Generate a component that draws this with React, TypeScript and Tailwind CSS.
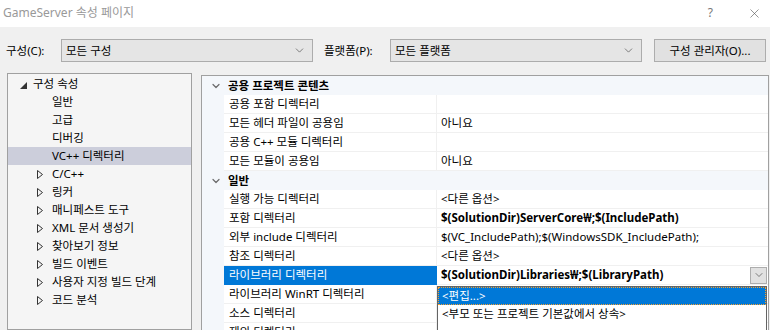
import { ChevronDown, X } from "lucide-react";

const tree = [
  { label: "일반", kind: "leaf" },
  { label: "고급", kind: "leaf" },
  { label: "디버깅", kind: "leaf" },
  { label: "VC++ 디렉터리", kind: "leaf", selected: true },
  { label: "C/C++", kind: "node" },
  { label: "링커", kind: "node" },
  { label: "매니페스트 도구", kind: "node" },
  { label: "XML 문서 생성기", kind: "node" },
  { label: "찾아보기 정보", kind: "node" },
  { label: "빌드 이벤트", kind: "node" },
  { label: "사용자 지정 빌드 단계", kind: "node" },
  { label: "코드 분석", kind: "node" },
];

type Row =
  | { type: "header"; label: string }
  | { type: "prop"; name: string; value?: string; bold?: boolean; selected?: boolean };

const rows: Row[] = [
  { type: "header", label: "공용 프로젝트 콘텐츠" },
  { type: "prop", name: "공용 포함 디렉터리" },
  { type: "prop", name: "모든 헤더 파일이 공용임", value: "아니요" },
  { type: "prop", name: "공용 C++ 모듈 디렉터리" },
  { type: "prop", name: "모든 모듈이 공용임", value: "아니요" },
  { type: "header", label: "일반" },
  { type: "prop", name: "실행 가능 디렉터리", value: "<다른 옵션>" },
  { type: "prop", name: "포함 디렉터리", value: "$(SolutionDir)ServerCore₩;$(IncludePath)", bold: true },
  { type: "prop", name: "외부 include 디렉터리", value: "$(VC_IncludePath);$(WindowsSDK_IncludePath);" },
  { type: "prop", name: "참조 디렉터리", value: "<다른 옵션>" },
  { type: "prop", name: "라이브러리 디렉터리", value: "$(SolutionDir)Libraries₩;$(LibraryPath)", bold: true, selected: true },
  { type: "prop", name: "라이브러리 WinRT 디렉터리" },
  { type: "prop", name: "소스 디렉터리" },
  { type: "prop", name: "제외 디렉터리" },
];

function Combo({ text, width }: { text: string; width: string }) {
  return (
    <div className={`${width} h-[23px] flex items-center justify-between border border-[#acacac] bg-[#e5e5e5] pl-[4px] pr-[6px]`}>
      <span>{text}</span>
      <ChevronDown size={13} strokeWidth={1.2} className="text-[#444]" />
    </div>
  );
}

export default function App() {
  return (
    <div className="w-[770px] h-[330px] overflow-hidden flex flex-col bg-[#f0f0f0] text-[11.5px] text-black font-['Segoe_UI','Noto_Sans','Noto_Sans_CJK_KR',sans-serif]">
      <div className="h-[27px] shrink-0 bg-white flex items-center pl-[3px] pr-[8px] text-[12px] text-[#999]">
        <span className="flex-1 -mt-[2px]">GameServer 속성 페이지</span>
        <span className="mr-[34px] text-[#777] -mt-[2px]">?</span>
        <X size={15} strokeWidth={1} className="text-[#555]" />
      </div>

      <div className="flex items-center h-[23px] mt-[12px] shrink-0">
        <span className="ml-[6px] w-[55px]">구성(C):</span>
        <Combo text="모든 구성" width="w-[252px]" />
        <span className="ml-[11px] w-[66px]">플랫폼(P):</span>
        <Combo text="모든 플랫폼" width="w-[252px]" />
        <div className="ml-[12px] w-[112px] h-[23px] flex items-center justify-center border border-[#adadad] bg-[#e1e1e1]">
          구성 관리자(O)...
        </div>
      </div>

      <div className="flex flex-1 mt-[11px] min-h-0">
        <div className="ml-[7px] w-[185px] border border-[#a0a0a0] bg-[#f5f5f5] pt-[1px]">
          <div className="h-[18px] flex items-center">
            <svg width="7" height="7" viewBox="0 0 7 7" className="ml-[12px] mt-[2px]">
              <polygon points="7,0 7,7 0,7" fill="#333" />
            </svg>
            <span className="ml-[6px]">구성 속성</span>
          </div>
          {tree.map((t) => (
            <div
              key={t.label}
              className={`h-[18px] flex items-center ${t.selected ? "bg-[#cccedb]" : ""}`}
            >
              {t.kind === "node" ? (
                <svg width="6" height="9" viewBox="0 0 6 9" className="ml-[29px] mr-[9px]">
                  <polygon points="0.5,0.5 5.5,4.5 0.5,8.5" fill="none" stroke="#333" strokeWidth="1" />
                </svg>
              ) : (
                <span className="w-[44px]" />
              )}
              <span>{t.label}</span>
            </div>
          ))}
        </div>

        <div className="relative ml-[9px] mt-[2px] flex-1 border-t border-l border-[#a0a0a0] mr-[1px] border-r bg-white">
          {rows.map((r, i) =>
            r.type === "header" ? (
              <div key={i} className="h-[19px] flex items-center bg-[#f4f7fb]">
                <ChevronDown size={12} strokeWidth={2.4} className="ml-[8px] text-[#6a6a6a]" />
                <span className="ml-[6px] font-bold">{r.label}</span>
              </div>
            ) : (
              <div key={i} className="h-[19px] flex">
                <div className="w-[22px] bg-[#f4f7fb]" />
                <div
                  className={`w-[213px] flex items-center pl-[5px] border-b border-r ${
                    r.selected ? "bg-[#0078d7] text-white border-[#0078d7]" : "border-[#f0f0f0]"
                  }`}
                >
                  {r.name}
                </div>
                <div className="flex-1 flex items-center pl-[4px] border-b border-[#f0f0f0]">
                  <span className={`flex-1 ${r.bold ? "font-bold" : ""}`}>{r.value}</span>
                  {r.selected && (
                    <div className="w-[17px] h-[17px] mr-[1px] flex items-center justify-center border border-[#adadad] bg-[#e1e1e1]">
                      <ChevronDown size={12} strokeWidth={1.3} className="text-[#444]" />
                    </div>
                  )}
                </div>
              </div>
            )
          )}

          <div className="absolute left-[235px] top-[210px] w-[330px] h-[60px] bg-white border border-[#646464]">
            <div className="h-[18px] flex items-center pl-[4px] bg-[#0078d7] text-white outline-1 outline-dotted outline-offset-[-1px] outline-[#f5a030]">
              &lt;편집...&gt;
            </div>
            <div className="h-[18px] flex items-center pl-[4px]">&lt;부모 또는 프로젝트 기본값에서 상속&gt;</div>
          </div>
        </div>
      </div>
    </div>
  );
}
